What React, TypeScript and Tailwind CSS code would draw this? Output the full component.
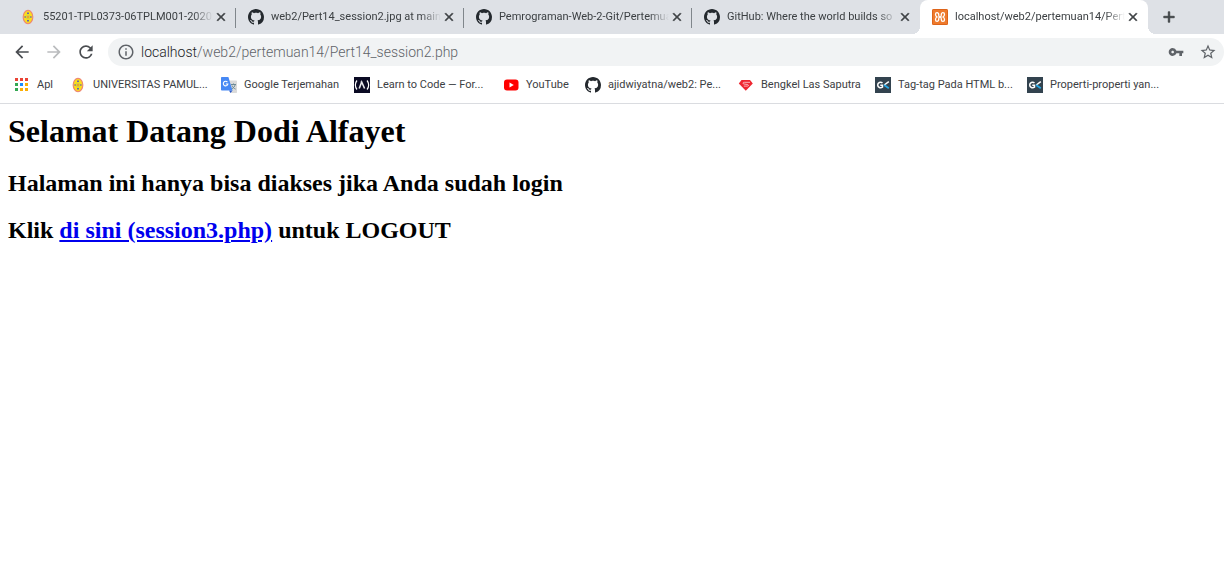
import type { ReactNode } from "react";
import {
  MdAdd,
  MdArrowBack,
  MdArrowForward,
  MdClose,
  MdInfoOutline,
  MdRefresh,
  MdStarBorder,
  MdVpnKey,
} from "react-icons/md";

const iconClass = "h-4 w-4 shrink-0";

function GithubIcon() {
  return (
    <svg viewBox="0 0 16 16" className={iconClass} fill="#24292e" aria-hidden="true">
      <path d="M8 0C3.58 0 0 3.58 0 8c0 3.54 2.29 6.53 5.47 7.59.4.07.55-.17.55-.38 0-.19-.01-.82-.01-1.49-2.01.37-2.53-.49-2.69-.94-.09-.23-.48-.94-.82-1.13-.28-.15-.68-.52-.01-.53.63-.01 1.08.58 1.23.82.72 1.21 1.87.87 2.33.66.07-.52.28-.87.51-1.07-1.78-.2-3.64-.89-3.64-3.95 0-.87.31-1.59.82-2.15-.08-.2-.36-1.02.08-2.12 0 0 .67-.21 2.2.82.64-.18 1.32-.27 2-.27s1.36.09 2 .27c1.53-1.04 2.2-.82 2.2-.82.44 1.1.16 1.92.08 2.12.51.56.82 1.27.82 2.15 0 3.07-1.87 3.75-3.65 3.95.29.25.54.73.54 1.48 0 1.07-.01 1.93-.01 2.2 0 .21.15.46.55.38A8.01 8.01 0 0 0 16 8c0-4.42-3.58-8-8-8z" />
    </svg>
  );
}

function UnpamIcon() {
  return (
    <svg viewBox="0 0 16 16" className={iconClass} aria-hidden="true">
      <ellipse cx="8" cy="8" rx="4.800" ry="6.600" fill="#fbe116" stroke="#ee8a72" strokeWidth="1.200" />
      <ellipse cx="8" cy="8" rx="2.200" ry="2.800" fill="#d9d23c" />
      <circle cx="8" cy="8" r="1.200" fill="#f0a429" />
      <path d="M7 3.600h2v1.300H7zM7 11.100h2v1.300H7zM4.600 7h1v2h-1zM10.400 7h1v2h-1z" fill="#6664b0" />
    </svg>
  );
}

function XamppIcon() {
  return (
    <svg viewBox="0 0 16 16" className={iconClass} aria-hidden="true">
      <rect width="16" height="16" rx="1.500" fill="#ee7a2c" />
      <rect x="0.500" y="0.500" width="15" height="15" rx="1" fill="none" stroke="#dd641a" />
      <path
        d="M6.700 6.200V5.300a1.600 1.600 0 0 0-3.200 0c0 1.300.5 2.200 1.500 2.700-1 .5-1.500 1.400-1.500 2.700a1.600 1.600 0 0 0 3.200 0v-.9M9.300 6.200v-.9a1.600 1.600 0 0 1 3.200 0c0 1.300-.5 2.200-1.500 2.700 1 .5 1.500 1.400 1.500 2.700a1.600 1.600 0 0 1-3.200 0v-.9M6.700 6c0 1.200.4 2 1.300 2s1.300-.8 1.300-2M6.700 10c0-1.200.4-2 1.300-2s1.300.8 1.300 2"
        fill="none"
        stroke="#fff"
        strokeWidth="1.300"
      />
    </svg>
  );
}

function AppsIcon() {
  return (
    <svg viewBox="0 0 16 16" className={iconClass} aria-hidden="true">
      <path d="M1 1h3v3H1zM6 1h3v3H6zM11 1h3v3h-3z" fill="#ea4335" />
      <path d="M1 6h3v3H1zM1 11h3v3H1z" fill="#34a853" />
      <path d="M6 6h3v3H6z" fill="#1a8cff" />
      <path d="M11 6h3v3h-3zM6 11h3v3H6zM11 11h3v3h-3z" fill="#fbae05" />
    </svg>
  );
}

function TranslateIcon() {
  return (
    <svg viewBox="0 0 16 16" className={iconClass} aria-hidden="true">
      <path d="M6 3.500h9.300a.7.700 0 0 1 .7.700v11.100a.7.700 0 0 1-.7.700H9.500z" fill="#dadada" />
      <path d="M10 7.500h5M12.500 6.500v1M14.200 7.500c-.4 2-1.700 3.500-3.600 4.500M11 8.500c.7 1.700 1.900 2.900 3.600 3.600" fill="none" stroke="#6c8a96" strokeWidth="1" />
      <path d="M8 13.500h3.500L9.500 16z" fill="#2a56c6" />
      <path d="M.8 0h6.600l4.100 13.500H.8a.8.800 0 0 1-.8-.8V.8A.8.800 0 0 1 .8 0z" fill="#4688f4" />
      <path d="M6.400 5.100A2.300 2.300 0 1 0 6.900 7H4.800" fill="none" stroke="#fff" strokeWidth="1.100" />
    </svg>
  );
}

function CampIcon() {
  return (
    <svg viewBox="0 0 16 16" className={iconClass} aria-hidden="true">
      <rect width="16" height="16" fill="#0a0a23" />
      <path d="M3 3.500C.8 6 .8 10 3 12.500M13 3.500c2.200 2.500 2.200 6.500 0 9" fill="none" stroke="#fff" strokeWidth="1.200" />
      <path d="M5.200 11.500 7.700 5l2.900 6.500M7 4.500l1 2" fill="none" stroke="#e6e6ea" strokeWidth="1.600" />
    </svg>
  );
}

function YoutubeIcon() {
  return (
    <svg viewBox="0 0 16 16" className={iconClass} aria-hidden="true">
      <rect x="1" y="2.500" width="14.500" height="11" rx="3" fill="#f00" />
      <path d="M6.500 5.500v5l4.300-2.500z" fill="#fff" />
    </svg>
  );
}

function ShieldIcon() {
  return (
    <svg viewBox="0 0 16 16" className={iconClass} aria-hidden="true">
      <path d="M3.500 3h8.500L14.800 6.500 7.800 13.700.8 6.500z" fill="#ee2630" />
      <path d="M12 5.300H6.500C4.500 5.300 4.500 6.800 6 7l3.500.5c1.300.3 1.100 1.600.1 1.600H5.800" fill="none" stroke="#fcd5d7" strokeWidth="0.800" />
    </svg>
  );
}

function GkIcon() {
  return (
    <svg viewBox="0 0 16 16" className={iconClass} aria-hidden="true">
      <rect width="16" height="16" fill="#33434f" />
      <path d="M7.500 5.900C5.500 4.400 2.700 5.500 2.700 8s2.800 3.500 4.800 2.200V8.200H5.300" fill="none" stroke="#fff" strokeWidth="1.500" />
      <path d="M13.800 4.700 9.200 8" fill="none" stroke="#fff" strokeWidth="1.500" />
      <path d="m9 8 4.800 3.300" fill="none" stroke="#25a9e8" strokeWidth="1.700" />
    </svg>
  );
}

type Tab = { title: string; icon: ReactNode; active?: boolean; divider?: boolean };

const tabs: Tab[] = [
  { title: "55201-TPL0373-06TPLM001-20202", icon: <UnpamIcon />, divider: true },
  { title: "web2/Pert14_session2.jpg at main", icon: <GithubIcon />, divider: true },
  { title: "Pemrograman-Web-2-Git/Pertemua", icon: <GithubIcon />, divider: true },
  { title: "GitHub: Where the world builds so", icon: <GithubIcon /> },
  { title: "localhost/web2/pertemuan14/Pert", icon: <XamppIcon />, active: true },
];

const bookmarks: { title: string; icon: ReactNode; width: string }[] = [
  { title: "Apl", icon: <AppsIcon />, width: "w-10" },
  { title: "UNIVERSITAS PAMUL...", icon: <UnpamIcon />, width: "w-[135px]" },
  { title: "Google Terjemahan", icon: <TranslateIcon />, width: "w-[117px]" },
  { title: "Learn to Code — For...", icon: <CampIcon />, width: "w-[133px]" },
  { title: "YouTube", icon: <YoutubeIcon />, width: "w-[66px]" },
  { title: "ajidwiyatna/web2: Pe...", icon: <GithubIcon />, width: "w-[137px]" },
  { title: "Bengkel Las Saputra", icon: <ShieldIcon />, width: "w-[121px]" },
  { title: "Tag-tag Pada HTML b...", icon: <GkIcon />, width: "w-[136px]" },
  { title: "Properti-properti yan...", icon: <GkIcon />, width: "w-[134px]" },
];

function TabItem({ tab }: { tab: Tab }) {
  return (
    <div
      className={
        tab.active
          ? "relative flex h-full w-[228px] items-center rounded-t-lg bg-white pr-[7px] pl-3"
          : "relative flex h-full w-[228px] items-center pr-[7px] pl-3"
      }
    >
      {tab.active && (
        <>
          <span className="absolute bottom-0 -left-2 h-2 w-2 bg-[radial-gradient(circle_at_0_0,#dee1e6_8px,#fff_8px)]" />
          <span className="absolute -right-2 bottom-0 h-2 w-2 bg-[radial-gradient(circle_at_100%_0,#dee1e6_8px,#fff_8px)]" />
        </>
      )}
      <button type="button" className="flex min-w-0 flex-1 items-center gap-[7px] text-left">
        {tab.icon}
        <span className="min-w-0 flex-1 overflow-hidden mask-r-from-[calc(100%-20px)] whitespace-nowrap">
          {tab.title}
        </span>
      </button>
      <button type="button" aria-label="Tutup tab" className="flex h-4 w-4 shrink-0 items-center justify-center text-[#3c4043]">
        <MdClose className="h-[14px] w-[14px] [&>path]:stroke-current [&>path]:stroke-1 [&>path[fill=none]]:stroke-none" />
      </button>
      {tab.divider && <span className="absolute top-2 right-0 h-5 w-px bg-[#80868b]" />}
    </div>
  );
}

export default function App() {
  return (
    <div className="min-h-screen bg-white">
      <header className="overflow-hidden border-b border-[#dadce0] font-[Roboto,sans-serif] text-[11px] leading-4 text-[#3c4043]">
        <nav aria-label="Tab" className="flex h-[34px] items-center bg-[#dee1e6] pl-2">
          {tabs.map((tab) => (
            <TabItem key={tab.title} tab={tab} />
          ))}
          <button type="button" aria-label="Tab baru" className="ml-[11px] flex h-5 w-5 items-center justify-center text-[#3c4043]">
            <MdAdd className="h-[18px] w-[18px] [&>path]:stroke-current [&>path]:stroke-1 [&>path[fill=none]]:stroke-none" />
          </button>
        </nav>
        <div className="flex h-9 items-center gap-3 pl-3 text-[#5f6368]">
          <button type="button" aria-label="Kembali" className="text-[#4a4d51]">
            <MdArrowBack className="h-5 w-5" />
          </button>
          <button type="button" aria-label="Maju" className="text-[#babcbe]">
            <MdArrowForward className="h-5 w-5" />
          </button>
          <button type="button" aria-label="Muat ulang" className="text-[#4a4d51]">
            <MdRefresh className="h-5 w-5" />
          </button>
          <div className="flex h-7 flex-1 items-center rounded-full bg-[#f1f3f4] pr-[7px] pl-[9px]">
            <button type="button" aria-label="Informasi situs">
              <MdInfoOutline className="h-[18px] w-[18px]" />
            </button>
            <span className="ml-[6px] flex-1 text-sm leading-5 font-light text-[#5f6368]">
              <span className="text-[#202124]">localhost</span>/web2/pertemuan14/Pert14_session2.php
            </span>
            <button type="button" aria-label="Sandi" className="mr-[15px]">
              <MdVpnKey className="h-4 w-4" />
            </button>
            <button type="button" aria-label="Tandai halaman ini">
              <MdStarBorder className="h-[18px] w-[18px]" />
            </button>
          </div>
        </div>
        <nav aria-label="Bookmark" className="flex h-[33px] items-center gap-4 pb-[3px] pl-[14px]">
          {bookmarks.map((item) => (
            <a key={item.title} href="#" className={`flex shrink-0 items-center gap-[7px] whitespace-nowrap ${item.width}`}>
              {item.icon}
              {item.title}
            </a>
          ))}
        </nav>
      </header>
      <main className="px-2 pt-[9px] font-['Liberation_Serif',serif] font-bold text-black">
        <h1 className="text-[32px] leading-[37px]">Selamat Datang Dodi Alfayet</h1>
        <h2 className="mt-5 text-2xl leading-[27px]">Halaman ini hanya bisa diakses jika Anda sudah login</h2>
        <h2 className="mt-5 text-2xl leading-[27px]">
          Klik{" "}
          <a href="#" className="text-[#0000ee] underline">
            di sini (session3.php)
          </a>{" "}
          untuk LOGOUT
        </h2>
      </main>
    </div>
  );
}
